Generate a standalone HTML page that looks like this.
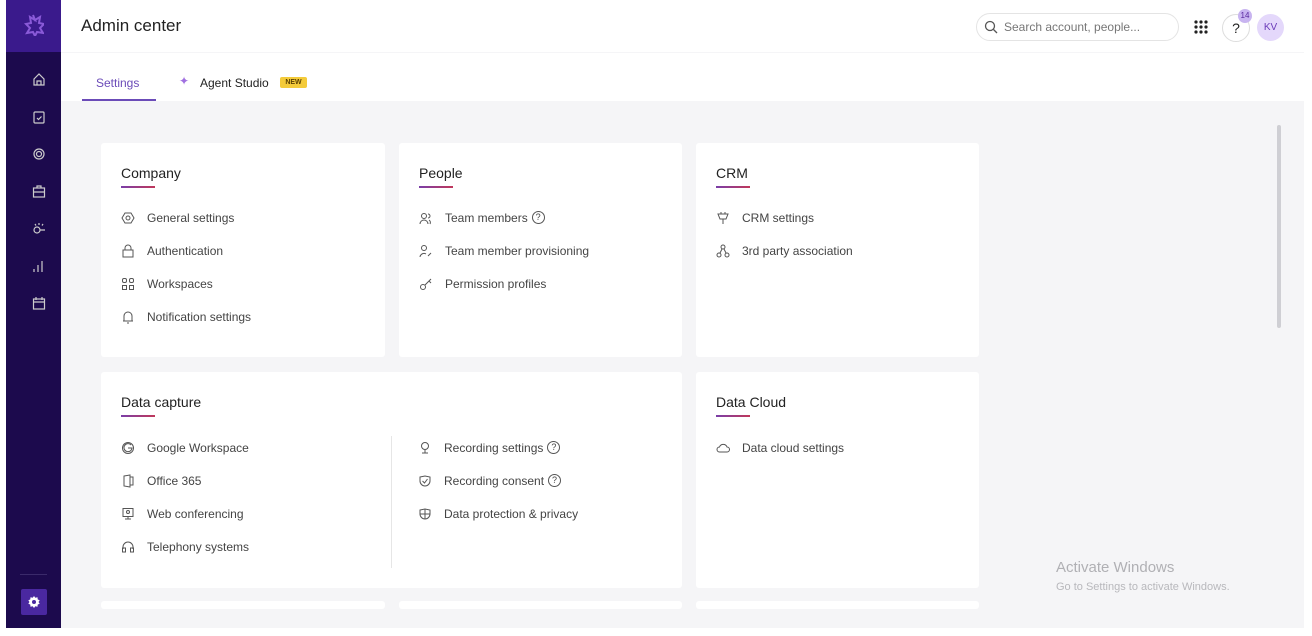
<!DOCTYPE html>
<html><head><meta charset="utf-8"><style>
*{margin:0;padding:0;box-sizing:border-box}
body{width:1312px;height:636px;position:relative;background:#fff;font-family:"Liberation Sans",sans-serif;color:#333;overflow:hidden}
.a{position:absolute}
.side{left:6px;top:0;width:55px;height:628px;background:#1c0a4d}
.logo{left:6px;top:0;width:55px;height:52px;background:#3a1a8c}
.main{left:61px;top:52px;width:1243px;height:576px;background:#f5f5f7}
.card{position:absolute;background:#fff;border-radius:3px}
.h{position:absolute;font-size:14px;color:#222}
.h:after{content:"";position:absolute;left:0;top:21px;width:34px;height:2px;background:linear-gradient(90deg,#7a3ea8,#c0385a)}
.it{position:absolute;font-size:12px;color:#444;white-space:nowrap;line-height:14px}
.it svg{position:absolute;left:-26px;top:0}
.q{display:inline-block;width:13px;height:13px;border:1px solid #555;border-radius:50%;font-size:9px;text-align:center;line-height:11px;margin-left:4px;vertical-align:top}
.si{position:absolute;left:26px}
</style></head><body>
<div class="a side"></div>
<div class="a logo"><svg class="a" style="left:16px;top:14px" width="22" height="22" viewBox="0 0 22 22"><path d="M11 1l2 5 5-3-1 6 5 1-4 4 3 5-6-1-2 4-2-4-6 1 3-5-4-4 5-1-1-6 5 3z" fill="none" stroke="#8a5ad8" stroke-width="2"/></svg></div>
<div class="a" style="left:81px;top:16px;font-size:17px;color:#222">Admin center</div>
<div class="a" style="left:61px;top:52px;width:1243px;height:1px;background:#d6d6d6"></div>
<div class="a" style="left:976px;top:13px;width:203px;height:28px;border:1px solid #e4e4e4;border-radius:14px"></div>
<svg class="a" style="left:984px;top:20px" width="14" height="14"><circle cx="6" cy="6" r="4.5" fill="none" stroke="#555" stroke-width="1.3"/><path d="M9.5 9.5l3.5 3.5" stroke="#555" stroke-width="1.3"/></svg>
<div class="a" style="left:1004px;top:20px;font-size:12px;color:#777">Search account, people...</div>
<svg class="a" style="left:1194px;top:20px" width="14" height="14" fill="#222"><circle cx="2" cy="2" r="1.6"/><circle cx="7" cy="2" r="1.6"/><circle cx="12" cy="2" r="1.6"/><circle cx="2" cy="7" r="1.6"/><circle cx="7" cy="7" r="1.6"/><circle cx="12" cy="7" r="1.6"/><circle cx="2" cy="12" r="1.6"/><circle cx="7" cy="12" r="1.6"/><circle cx="12" cy="12" r="1.6"/></svg>
<div class="a" style="left:1222px;top:14px;width:28px;height:28px;border:1px solid #ddd;border-radius:50%;text-align:center;line-height:26px;font-size:14px;color:#222">?</div>
<div class="a" style="left:1238px;top:9px;width:14px;height:14px;background:#c8b4f0;border-radius:50%;font-size:8px;text-align:center;line-height:14px;color:#5a2aa0">14</div>
<div class="a" style="left:1257px;top:14px;width:27px;height:27px;background:#e4d8fb;border-radius:50%;font-size:10px;text-align:center;line-height:27px;color:#6a3ab8">KV</div>
<div class="a main"></div>
<div class="a" style="left:61px;top:53px;width:1243px;height:48px;background:#fff"></div>
<div class="a" style="left:96px;top:76px;font-size:12px;color:#6b4bb8">Settings</div>
<div class="a" style="left:82px;top:99px;width:74px;height:2px;background:#6b4bb8"></div>
<div class="a" style="left:179px;top:74px;font-size:12px;color:#a070e0">✦</div>
<div class="a" style="left:200px;top:76px;font-size:12px;color:#222">Agent Studio</div>
<div class="a" style="left:280px;top:77px;width:27px;height:11px;background:#f4cb3a;border-radius:2px;font-size:7px;font-weight:bold;text-align:center;line-height:11px;color:#5a4000">NEW</div>
<div class="a" style="left:6px;top:0;width:55px">
<svg class="si" style="top:72px" width="14" height="14" fill="none" stroke="#ccc" stroke-width="1.2"><path d="M2 7l5-5 5 5v6H2z M5 13V9h4v4"/></svg>
<svg class="si" style="top:110px" width="14" height="14" fill="none" stroke="#ccc" stroke-width="1.2"><rect x="2" y="2" width="10" height="11" rx="1"/><path d="M5 8l1.5 1.5 3-3"/></svg>
<svg class="si" style="top:147px" width="14" height="14" fill="none" stroke="#ccc" stroke-width="1.2"><circle cx="7" cy="7" r="5"/><circle cx="7" cy="7" r="2.5"/></svg>
<svg class="si" style="top:184px" width="14" height="14" fill="none" stroke="#ccc" stroke-width="1.2"><rect x="1.5" y="4" width="11" height="9"/><path d="M5 4V2h4v2M1.5 8h11"/></svg>
<svg class="si" style="top:221px" width="14" height="14" fill="none" stroke="#ccc" stroke-width="1.2"><circle cx="5" cy="9" r="3"/><path d="M8 9h5M7 2v2M3 3l1 1.5M11 3l-1 1.5"/></svg>
<svg class="si" style="top:259px" width="14" height="14" fill="none" stroke="#ccc" stroke-width="1.2"><path d="M2 10v3M6 6v7M10 2v11"/></svg>
<svg class="si" style="top:296px" width="14" height="14" fill="none" stroke="#ccc" stroke-width="1.2"><rect x="1.5" y="3" width="11" height="10"/><path d="M1.5 6h11M4 1v3M10 1v3"/></svg>
</div>
<div class="a" style="left:20px;top:574px;width:27px;height:1px;background:#3a2a6a"></div>
<div class="a" style="left:21px;top:589px;width:26px;height:26px;background:#4a28a0;border-radius:2px"></div>
<svg class="a" style="left:27px;top:595px" width="14" height="14" viewBox="0 0 14 14"><path d="M7 1l1.3 1.8 2.2-.6.2 2.2 2 1L11.5 7l1.2 1.6-2 1-.2 2.2-2.2-.6L7 13l-1.3-1.8-2.2.6-.2-2.2-2-1L2.5 7 1.3 5.4l2-1 .2-2.2 2.2.6z" fill="#fff"/><circle cx="7" cy="7" r="2" fill="#4a28a0"/></svg>

<div class="card" style="left:101px;top:143px;width:284px;height:214px">
<div class="h" style="left:20px;top:22px">Company</div>
<div class="it" style="left:46px;top:68px"><svg width="14" height="14" fill="none" stroke="#555"><path d="M4 2h6l3 5-3 5H4L1 7z"/><circle cx="7" cy="7" r="2"/></svg>General settings</div>
<div class="it" style="left:46px;top:101px"><svg width="14" height="14" fill="none" stroke="#555"><rect x="2" y="6" width="10" height="7"/><path d="M4 6V4a3 3 0 016 0v2"/></svg>Authentication</div>
<div class="it" style="left:46px;top:134px"><svg width="14" height="14" fill="none" stroke="#555"><rect x="1.5" y="1.5" width="4" height="4" rx="1.5"/><rect x="8.5" y="1.5" width="4" height="4" rx="1.5"/><rect x="1.5" y="8.5" width="4" height="4"/><rect x="8.5" y="8.5" width="4" height="4"/></svg>Workspaces</div>
<div class="it" style="left:46px;top:167px"><svg width="14" height="14" fill="none" stroke="#555"><path d="M3 11V6a4 4 0 018 0v5H2h10M6 13h2"/></svg>Notification settings</div>
</div>
<div class="card" style="left:399px;top:143px;width:283px;height:214px">
<div class="h" style="left:20px;top:22px">People</div>
<div class="it" style="left:46px;top:68px"><svg width="14" height="14" fill="none" stroke="#555"><circle cx="5" cy="5" r="2.5"/><path d="M1 13a4 4 0 018 0M9 3a2 2 0 010 4M11 13a3 3 0 00-1-4"/></svg>Team members<span class="q">?</span></div>
<div class="it" style="left:46px;top:101px"><svg width="14" height="14" fill="none" stroke="#555"><circle cx="5" cy="4" r="2.5"/><path d="M1 13a4 4 0 016-3M9 12l3-3"/></svg>Team member provisioning</div>
<div class="it" style="left:46px;top:134px"><svg width="14" height="14" fill="none" stroke="#555"><circle cx="4" cy="10" r="2.5"/><path d="M6 8l6-6M10 4l2 2"/></svg>Permission profiles</div>
</div>
<div class="card" style="left:696px;top:143px;width:283px;height:214px">
<div class="h" style="left:20px;top:22px">CRM</div>
<div class="it" style="left:46px;top:68px"><svg width="14" height="14" fill="none" stroke="#555"><path d="M2 3h10l-2 5H4zM7 8v5M5 1v2M9 1v2"/></svg>CRM settings</div>
<div class="it" style="left:46px;top:101px"><svg width="14" height="14" fill="none" stroke="#555"><circle cx="7" cy="3" r="2"/><circle cx="3" cy="11" r="2"/><circle cx="11" cy="11" r="2"/><path d="M6 5l-2 4M8 5l2 4"/></svg>3rd party association</div>
</div>
<div class="card" style="left:101px;top:372px;width:581px;height:216px">
<div class="h" style="left:20px;top:22px">Data capture</div>
<div class="it" style="left:46px;top:69px"><svg width="14" height="14" fill="none" stroke="#555"><circle cx="7" cy="7" r="5.5"/><path d="M7 7h4a4 4 0 11-1-3"/></svg>Google Workspace</div>
<div class="it" style="left:46px;top:102px"><svg width="14" height="14" fill="none" stroke="#555"><path d="M3 2l6-1v12l-6-1zM9 3h3v8H9"/></svg>Office 365</div>
<div class="it" style="left:46px;top:135px"><svg width="14" height="14" fill="none" stroke="#555"><rect x="2" y="1.5" width="10" height="8"/><path d="M4 12h6M7 10v2"/><circle cx="7" cy="5" r="1.5"/></svg>Web conferencing</div>
<div class="it" style="left:46px;top:168px"><svg width="14" height="14" fill="none" stroke="#555"><path d="M2 9V7a5 5 0 0110 0v2"/><rect x="1.5" y="8" width="3" height="4"/><rect x="9.5" y="8" width="3" height="4"/></svg>Telephony systems</div>
<div class="a" style="left:290px;top:64px;width:1px;height:132px;background:#e6e6e6"></div>
<div class="it" style="left:343px;top:69px"><svg width="14" height="14" fill="none" stroke="#555"><circle cx="7" cy="5" r="3.5"/><path d="M7 9v3M4 12h6"/></svg>Recording settings<span class="q">?</span></div>
<div class="it" style="left:343px;top:102px"><svg width="14" height="14" fill="none" stroke="#555"><path d="M2 3l5-1 5 1v4a5 5 0 01-5 5 5 5 0 01-5-5z M4.5 7l2 2 3-4"/></svg>Recording consent<span class="q">?</span></div>
<div class="it" style="left:343px;top:135px"><svg width="14" height="14" fill="none" stroke="#555"><path d="M2 3l5-1 5 1v4a5 5 0 01-10 0zM7 2v10M2 7h10"/></svg>Data protection &amp; privacy</div>
</div>
<div class="card" style="left:696px;top:372px;width:283px;height:216px">
<div class="h" style="left:20px;top:22px">Data Cloud</div>
<div class="it" style="left:46px;top:69px"><svg width="14" height="14" fill="none" stroke="#555"><path d="M3.5 11a2.5 2.5 0 010-5 4 4 0 017.5 0 2.5 2.5 0 010 5z"/></svg>Data cloud settings</div>
</div>
<div class="card" style="left:101px;top:601px;width:284px;height:8px"></div>
<div class="card" style="left:399px;top:601px;width:283px;height:8px"></div>
<div class="card" style="left:696px;top:601px;width:283px;height:8px"></div>
<div class="a" style="left:1277px;top:125px;width:4px;height:203px;background:#cfcfd4;border-radius:2px"></div>
<div class="a" style="left:1056px;top:559px;font-size:15px;color:#b0b0b4">Activate Windows</div>
<div class="a" style="left:1056px;top:581px;font-size:11px;color:#b8b8bc">Go to Settings to activate Windows.</div>
</body></html>
